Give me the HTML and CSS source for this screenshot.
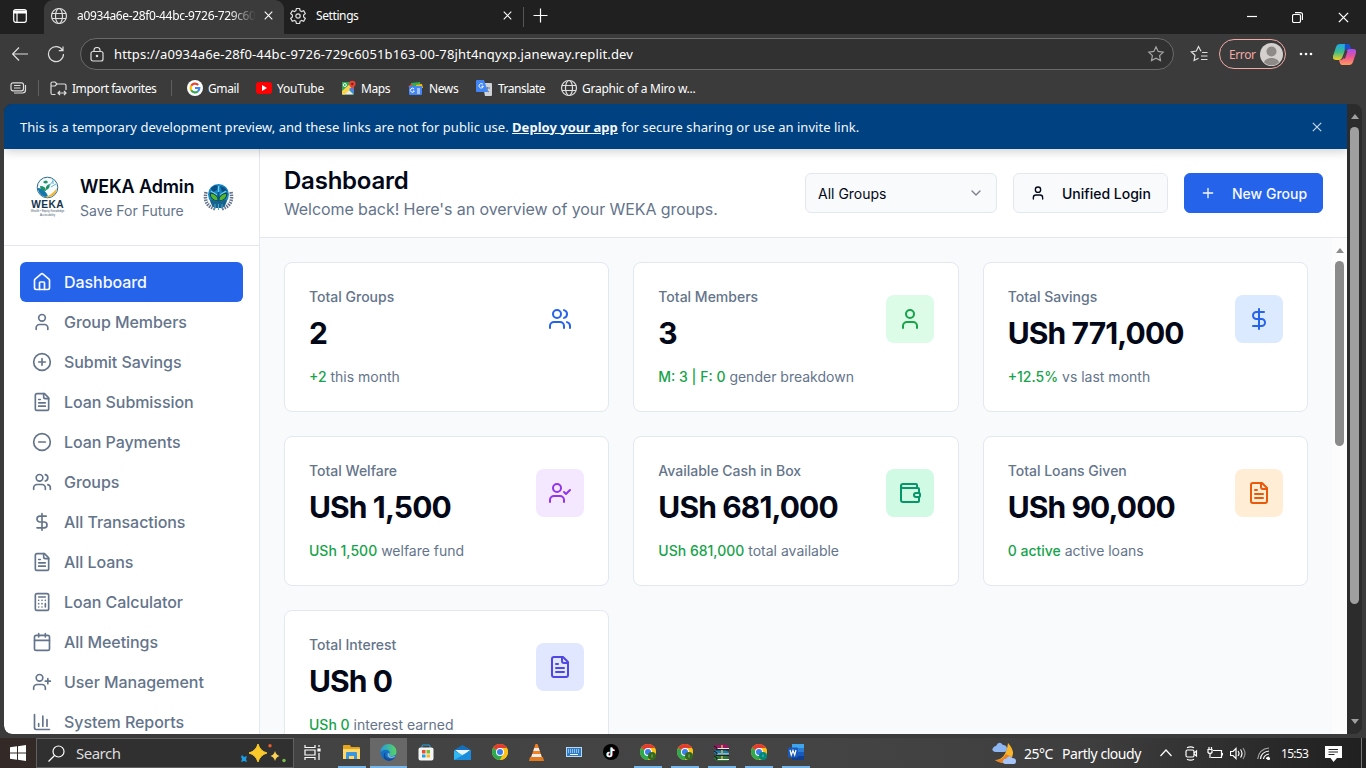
FILE: index.html
```
<!DOCTYPE html>
<html lang="en">
<head>
<meta charset="utf-8">
<title>WEKA Admin</title>
<link rel="stylesheet" href="styles.css">
</head>
<body>
<svg class="sprite" width="0" height="0">
  <defs>
    <symbol id="house" viewBox="0 0 24 24"><path d="M15 21v-8a1 1 0 0 0-1-1h-4a1 1 0 0 0-1 1v8"/><path d="M3 10a2 2 0 0 1 .709-1.528l7-5.999a2 2 0 0 1 2.582 0l7 5.999A2 2 0 0 1 21 10v9a2 2 0 0 1-2 2H5a2 2 0 0 1-2-2z"/></symbol>
    <symbol id="user" viewBox="0 0 24 24"><path d="M19 21v-2a4 4 0 0 0-4-4H9a4 4 0 0 0-4 4v2"/><circle cx="12" cy="7" r="4"/></symbol>
    <symbol id="users" viewBox="0 0 24 24"><path d="M16 21v-2a4 4 0 0 0-4-4H6a4 4 0 0 0-4 4v2"/><circle cx="9" cy="7" r="4"/><path d="M22 21v-2a4 4 0 0 0-3-3.87M16 3.13a4 4 0 0 1 0 7.75"/></symbol>
    <symbol id="user-plus" viewBox="0 0 24 24"><path d="M16 21v-2a4 4 0 0 0-4-4H6a4 4 0 0 0-4 4v2"/><circle cx="9" cy="7" r="4"/><path d="M19 8v6M22 11h-6"/></symbol>
    <symbol id="user-check" viewBox="0 0 24 24"><path d="M16 21v-2a4 4 0 0 0-4-4H6a4 4 0 0 0-4 4v2"/><circle cx="9" cy="7" r="4"/><path d="m16 11 2 2 4-4"/></symbol>
    <symbol id="circle-plus" viewBox="0 0 24 24"><circle cx="12" cy="12" r="10"/><path d="M8 12h8M12 8v8"/></symbol>
    <symbol id="circle-minus" viewBox="0 0 24 24"><circle cx="12" cy="12" r="10"/><path d="M8 12h8"/></symbol>
    <symbol id="file" viewBox="0 0 24 24"><path d="M15 2H6a2 2 0 0 0-2 2v16a2 2 0 0 0 2 2h12a2 2 0 0 0 2-2V7Z"/><path d="M14 2v4a2 2 0 0 0 2 2h4M10 9H8M16 13H8M16 17H8"/></symbol>
    <symbol id="dollar" viewBox="0 0 24 24"><path d="M12 2v20M17 5H9.5a3.5 3.5 0 0 0 0 7h5a3.5 3.5 0 0 1 0 7H6"/></symbol>
    <symbol id="calculator" viewBox="0 0 24 24"><rect width="16" height="20" x="4" y="2" rx="2"/><path d="M8 6h8M16 14v4M16 10h.01M12 10h.01M8 10h.01M12 14h.01M8 14h.01M12 18h.01M8 18h.01"/></symbol>
    <symbol id="calendar" viewBox="0 0 24 24"><path d="M8 2v4M16 2v4"/><rect width="18" height="18" x="3" y="4" rx="2"/><path d="M3 10h18"/></symbol>
    <symbol id="chart" viewBox="0 0 24 24"><path d="M3 3v16a2 2 0 0 0 2 2h16M18 17V9M13 17V5M8 17v-3"/></symbol>
    <symbol id="wallet" viewBox="0 0 24 24"><path d="M19 7V4a1 1 0 0 0-1-1H5a2 2 0 0 0 0 4h15a1 1 0 0 1 1 1v4h-3a2 2 0 0 0 0 4h3a1 1 0 0 0 1-1v-2a1 1 0 0 0-1-1"/><path d="M3 5v14a2 2 0 0 0 2 2h15a1 1 0 0 0 1-1v-4"/></symbol>
    <symbol id="plus" viewBox="0 0 24 24"><path d="M5 12h14M12 5v14"/></symbol>
    <symbol id="chevron" viewBox="0 0 24 24"><path d="m6 9 6 6 6-6"/></symbol>
    <symbol id="close" viewBox="0 0 10 10"><path d="M.8.8l8.4 8.4M9.2.8.8 9.2"/></symbol>
    <symbol id="globe" viewBox="0 0 18 18"><circle cx="9" cy="9" r="7.5"/><ellipse cx="9" cy="9" rx="3.5" ry="7.5"/><path d="M2 6.5h14M2 11.5h14"/></symbol>
    <symbol id="star" viewBox="0 0 18 18"><path d="m9 1.8 2.2 4.6 5 .7-3.6 3.5.9 5L9 13.2l-4.5 2.4.9-5L1.8 7.1l5-.7z"/></symbol>
    <symbol id="chrome" viewBox="0 0 18 18"><circle cx="9" cy="9" r="8" fill="#fbc116"/><path d="M9 9 2.1 5A8 8 0 0 1 15.9 5z" fill="#e33b2e"/><path d="M2.1 5A8 8 0 0 0 9 17l3.3-6z" fill="#2da94f"/><path d="M9 5h6.9A8 8 0 0 1 9 17l3.5-6z" fill="#fbc116"/><circle cx="9" cy="9" r="4" fill="#fff"/><circle cx="9" cy="9" r="3" fill="#3b7ded"/></symbol>
  </defs>
</svg>

<div class="desktop">
  <div class="tabs">
    <div class="tab-menu"><svg width="16" height="16" viewBox="0 0 16 16" class="line white"><rect x="1.7" y="1.7" width="12.6" height="12.6" rx="2"/><path d="M2 3h12v2H2z" fill="#fff"/><path d="M5 5v9"/></svg></div>
    <div class="tab active">
      <svg width="18" height="18" class="line light"><use href="#globe"/></svg>
      <span class="tab-title fade">a0934a6e-28f0-44bc-9726-729c60</span>
      <svg width="9" height="9" class="line white"><use href="#close"/></svg>
    </div>
    <div class="tab">
      <svg width="18" height="18" viewBox="0 0 18 18" class="line light"><path d="M7.4 1.5h3.2l.5 2.2 1.4.8 2.2-.7 1.6 2.8-1.7 1.5v1.8l1.7 1.5-1.6 2.8-2.2-.7-1.4.8-.5 2.2H7.4l-.5-2.2-1.4-.8-2.2.7-1.6-2.8 1.7-1.5V8.100L1.700 6.600l1.600-2.800 2.200.7 1.400-.8z"/><circle cx="9" cy="9" r="2.200"/></svg>
      <span class="tab-title">Settings</span>
      <svg width="9" height="9" class="line white"><use href="#close"/></svg>
    </div>
    <div class="new-tab"><svg width="15" height="15" viewBox="0 0 15 15" class="line white"><path d="M7.500.5v14M.5 7.500h14"/></svg></div>
    <div class="window-buttons">
      <svg width="10" height="10" viewBox="0 0 10 10" class="line white"><path d="M0 4.500h10"/></svg>
      <svg width="11" height="11" viewBox="0 0 11 11" class="line white"><rect x=".5" y="2.500" width="8" height="8" rx="1.500"/><path d="M3 .6h5.500a2 2 0 0 1 2 2V8"/></svg>
      <svg width="11" height="11" class="line white"><use href="#close"/></svg>
    </div>
  </div>

  <div class="toolbar">
    <svg width="16" height="14" viewBox="0 0 16 14" class="line light"><path d="M16 7H.8M7 .5.6 7 7 13.500"/></svg>
    <svg width="18" height="18" viewBox="0 0 18 18" class="line light reload"><path d="M15.600 5.500A7.500 7.500 0 1 0 16.500 9M16 1.500v4.200h-4.200"/></svg>
    <div class="address">
      <svg width="14" height="15" viewBox="0 0 14 15" class="line light"><rect x="1" y="4.500" width="12" height="9.500" rx="2"/><path d="M4 4.500V3a3 2.500 0 0 1 6 0v1.500"/><circle cx="7" cy="9" r=".7" fill="#ddd"/></svg>
      <span class="url">https://a0934a6e-28f0-44bc-9726-729c6051b163-00-78jht4nqyxp.janeway.replit.dev</span>
      <svg width="18" height="18" class="line dim"><use href="#star"/></svg>
    </div>
    <svg width="18" height="18" viewBox="0 0 18 18" class="line light favorites"><path d="M11 6.200 8.500 1.500 6.300 6l-5 .8L5 10.300 4.100 15.500l4.400-2.300M12 7.500h5.500M11 11h6.500M11 14.500h6.500"/></svg>
    <div class="profile"><span>Error</span><svg width="23" height="23" viewBox="0 0 23 23"><circle cx="11.500" cy="11.500" r="11.500" fill="#d3d0cd"/><circle cx="11.500" cy="8.500" r="5" fill="#8d8a87"/><path d="M4 19.500c1-6 14-6 15 0a11.500 11.500 0 0 1-15 0z" fill="#8d8a87"/></svg></div>
    <svg width="14" height="4" viewBox="0 0 14 4" fill="#fff" class="more"><circle cx="2" cy="2" r="1.300"/><circle cx="7" cy="2" r="1.300"/><circle cx="12" cy="2" r="1.300"/></svg>
    <svg width="23" height="21" viewBox="0 0 23 21" class="copilot">
      <defs><linearGradient id="cpA" x1="0" y1="0" x2="0" y2="1"><stop offset="0" stop-color="#1da8e8"/><stop offset=".5" stop-color="#3ebc8c"/><stop offset="1" stop-color="#f4cf21"/></linearGradient><linearGradient id="cpB" x1="0" y1="0" x2="0" y2="1"><stop offset="0" stop-color="#a44df0"/><stop offset=".5" stop-color="#ee5492"/><stop offset="1" stop-color="#ff9c5c"/></linearGradient></defs>
      <path d="M7 0h7q2 0 3 5h-4q-1 0-2 4l-2 5q-1 2-3 2H3q-4 0-3-4L3 3q1-3 4-3z" fill="url(#cpA)"/><path d="M12 0h3q2 0 3 5h-5q-1 0-1.500 1.500z" fill="#1650d0"/><path d="M16 21H9q-2 0-3-5h1q3 0 4-3l2-5q1-3 3-3h4q4 0 3 4l-3 9q-1 3-4 3z" fill="url(#cpB)"/><path d="M10.500 14.500 13 7h1.500L12 14.500z" fill="#3b3b3b"/>
    </svg>
  </div>

  <div class="bookmarks">
    <svg width="17" height="12" viewBox="0 0 17 12" class="line light"><rect x="1" y=".8" width="12.500" height="8" rx="2"/><path d="M4 3.500h6.500M4 6h6.500M15.500 3v5q0 3-3 3H4"/></svg>
    <i class="sep"></i>
    <svg width="17" height="15" viewBox="0 0 17 15" class="line light"><path d="M5.500 13.500H2.500Q1 13.500 1 12V2.500Q1 1 2.500 1H5l2 2h7.500Q16 3 16 4.500V9M1 5h4l2-2M8 12h8M10 10l-2 2 2 2M14 10l2 2-2 2"/></svg>
    <span class="bm bm-import">Import favorites</span>
    <i class="sep"></i>
    <svg width="16" height="16" viewBox="0 0 16 16"><circle cx="8" cy="8" r="8" fill="#fff"/><g fill="none" stroke-width="2.200"><path d="M4.200 5.700A4.400 4.400 0 0 1 11.200 5" stroke="#ea4335"/><path d="M4.200 5.700a4.400 4.400 0 0 0 0 4.600" stroke="#fbbc05"/><path d="M4.200 10.300A4.400 4.400 0 0 0 11 11.200" stroke="#34a853"/><path d="M11 11.200A4.400 4.400 0 0 0 12.300 8H8" stroke="#4285f4"/></g></svg>
    <span class="bm bm-gmail">Gmail</span>
    <svg width="16" height="12" viewBox="0 0 16 12"><rect width="16" height="12" rx="3" fill="#f00"/><path d="m6 3 5 3-5 3z" fill="#fff"/></svg>
    <span class="bm bm-youtube">YouTube</span>
    <svg width="15" height="16" viewBox="0 0 15 16"><path d="M1 2h12v12.500H1z" fill="#34a853"/><path d="M7 9 1.500 14.500h11z" fill="#e8eaed"/><path d="M1 11 10 3h2v4L3.500 14.500H1z" fill="#fbd34b"/><path d="m8 9 5 5V8l-2-1z" fill="#4285f4"/><path d="M8 4a3.300 3.300 0 0 1 6.600 0c0 2.200-2.600 3-3.300 6-.7-3-3.300-3.800-3.300-6z" fill="#ea4335"/><circle cx="11.300" cy="4" r="1.200" fill="#8a1c14"/><circle cx="3.800" cy="5" r="1.500" fill="none" stroke="#fff"/></svg>
    <span class="bm bm-maps">Maps</span>
    <svg width="15" height="13" viewBox="0 0 15 13"><path d="m3 1 9-1 1 5H3z" fill="#34a853"/><path d="m0 5 3-3 3 3z" fill="#ea4335"/><path d="m8 3 6-1 1 4H8z" fill="#fbbc05"/><rect x="1" y="4" width="13" height="9" rx="1" fill="#4285f4"/><path d="M6 7a2 2 0 1 0 .3 2H5M9 7h3M9 9h3M9 11h3" fill="none" stroke="#fff"/></svg>
    <span class="bm bm-news">News</span>
    <svg width="16" height="16" viewBox="0 0 16 16"><path d="M6 3h9q1 0 1 1v11q0 1-1 1H9z" fill="#cfd2d6"/><path d="M9 8h5M11.500 7v1q0 3-3 4M10 9q1 2 3 3" stroke="#66809b" fill="none"/><path d="M1 0h7l4 12H1q-1 0-1-1V1q0-1 1-1z" fill="#4285f4"/><path d="M7 4.500a2.200 2.200 0 1 0 .4 1.800H5.500" fill="none" stroke="#fff"/></svg>
    <span class="bm bm-translate">Translate</span>
    <svg width="18" height="18" class="line light"><use href="#globe"/></svg>
    <span class="bm bm-miro">Graphic of a Miro w...</span>
  </div>

  <div class="viewport">
    <div class="page">
      <div class="banner">
        <p>This is a temporary development preview, and these links are not for public use. <a>Deploy your app</a> for secure sharing or use an invite link.</p>
        <svg width="10" height="10" class="line"><use href="#close"/></svg>
      </div>
      <div class="app">
        <aside class="sidebar">
          <div class="brand">
            <svg class="brand-logo" width="36" height="42" viewBox="0 0 36 42">
              <circle cx="17.500" cy="11.500" r="10.300" fill="#f5fafa" stroke="#286b92" stroke-width="1"/><path d="M7.500 12q5 0 8 4 3 3 2 5.500-8-1-10-9.500z" fill="#1476aa"/><path d="M15 21q7-2 12-9-.5 8.500-10 9.500z" fill="#f3b839"/><path d="M16 15q-6 0-6-5 6 0 6 5zm0-1q-1-5 4-6 0 5-4 6zM13 6q3-3 5 0-2 3-5 0z" fill="#1b9367"/><path d="M19 10l4-5M21 11l5-3M23 3v5" stroke="#69b5da"/>
              <text x="17.700" y="32.200" class="logo-name">WEKA</text><text x="17.500" y="36" class="logo-tag">Wealth • Equity Knowledge</text><text x="17.500" y="39.500" class="logo-tag">Accessibility</text>
            </svg>
            <div class="brand-text"><h2>WEKA Admin</h2><p>Save For Future</p></div>
            <svg class="brand-seal" width="31" height="28" viewBox="0 0 31 28"><g fill="none" stroke="#65738b" stroke-width="3.500" stroke-dasharray="1.500 1"><path d="M3 9q-3 14 10 17M28 9q3 14-10 17"/></g><circle cx="15.500" cy="11.500" r="10.500" fill="#1588c5"/><path d="M8 5q4-4 7-2l-1 4-5 3zM17 3q6 1 7 5l-5 1z" fill="#0e4f86"/><path d="M15.500 3v9M8 8l6 4M23 8l-6 4" stroke="#6fd0ec" stroke-width="1.200"/><path d="M15.500 18q-8 0-8.500-8 8 1 8.500 8zm0 0q8 0 8.500-8-8 1-8.500 8z" fill="#53b72e" stroke="#123d44" stroke-width="1"/><path d="M15.500 9v13" stroke="#08598f" stroke-width="2"/><path d="M7 17q4-1 8.500 2 4-3 8.500-2-1 7-6 8h-5q-5-1-6-8z" fill="#17658e"/><path d="M12 21v5M15.500 21v6M19 21v5" stroke="#4ba7cf"/></svg>
          </div>
          <nav>
            <a class="active"><svg><use href="#house"/></svg>Dashboard</a>
            <a><svg><use href="#user"/></svg>Group Members</a>
            <a><svg><use href="#circle-plus"/></svg>Submit Savings</a>
            <a><svg><use href="#file"/></svg>Loan Submission</a>
            <a><svg><use href="#circle-minus"/></svg>Loan Payments</a>
            <a><svg><use href="#users"/></svg>Groups</a>
            <a><svg><use href="#dollar"/></svg>All Transactions</a>
            <a><svg><use href="#file"/></svg>All Loans</a>
            <a><svg><use href="#calculator"/></svg>Loan Calculator</a>
            <a><svg><use href="#calendar"/></svg>All Meetings</a>
            <a><svg><use href="#user-plus"/></svg>User Management</a>
            <a><svg><use href="#chart"/></svg>System Reports</a>
          </nav>
        </aside>
        <main>
          <header>
            <div><h1>Dashboard</h1><p>Welcome back! Here's an overview of your WEKA groups.</p></div>
            <div class="actions">
              <div class="select">All Groups<svg><use href="#chevron"/></svg></div>
              <div class="button"><svg><use href="#user"/></svg>Unified Login</div>
              <div class="button primary"><svg><use href="#plus"/></svg>New Group</div>
            </div>
          </header>
          <div class="content">
            <div class="cards">
              <section class="card"><div class="top"><div><h3>Total Groups</h3><strong>2</strong></div><span class="badge plain"><svg><use href="#users"/></svg></span></div><p><b>+2</b> this month</p></section>
              <section class="card"><div class="top"><div><h3>Total Members</h3><strong>3</strong></div><span class="badge green"><svg><use href="#user"/></svg></span></div><p><b>M: 3 | F: 0</b> gender breakdown</p></section>
              <section class="card"><div class="top"><div><h3>Total Savings</h3><strong>USh 771,000</strong></div><span class="badge blue"><svg><use href="#dollar"/></svg></span></div><p><b>+12.5%</b> vs last month</p></section>
              <section class="card"><div class="top"><div><h3>Total Welfare</h3><strong>USh 1,500</strong></div><span class="badge purple"><svg><use href="#user-check"/></svg></span></div><p><b>USh 1,500</b> welfare fund</p></section>
              <section class="card"><div class="top"><div><h3>Available Cash in Box</h3><strong>USh 681,000</strong></div><span class="badge emerald"><svg><use href="#wallet"/></svg></span></div><p><b>USh 681,000</b> total available</p></section>
              <section class="card"><div class="top"><div><h3>Total Loans Given</h3><strong>USh 90,000</strong></div><span class="badge orange"><svg><use href="#file"/></svg></span></div><p><b>0 active</b> active loans</p></section>
              <section class="card"><div class="top"><div><h3>Total Interest</h3><strong>USh 0</strong></div><span class="badge indigo"><svg><use href="#file"/></svg></span></div><p><b>USh 0</b> interest earned</p></section>
            </div>
            <div class="scrollbar inner"><i class="arrow up"></i><i class="thumb"></i></div>
          </div>
        </main>
      </div>
    </div>
    <div class="scrollbar outer"><i class="arrow up"></i><i class="thumb"></i><i class="arrow down"></i></div>
  </div>

  <div class="taskbar">
    <div class="start"><svg width="16" height="16" viewBox="0 0 16 16" fill="#fff"><path d="M0 2.300 7 1.300v6.200H0zM8 1.200 16 0v7.500H8zM0 8.500h7v6.200l-7-1zM8 8.500h8V16l-8-1.200z"/></svg></div>
    <div class="search">
      <svg width="17" height="17" viewBox="0 0 17 17" class="line white"><circle cx="10.500" cy="6.500" r="5.500"/><path d="M6.500 10.500.5 16.500"/></svg><span>Search</span>
      <svg width="46" height="19" viewBox="0 0 46 19"><path d="M18 0q2 7 9 9-7 2-9 9-2-7-9-9 7-2 9-9z" fill="#fbc929" stroke="#fbc929"/><path d="M35 7q1 4 4.500 5Q36 13 35 17q-1-4-4.500-5Q34 11 35 7z" fill="#fbd255"/><path d="m2 11 2 2 3-1-1 3 1 3-3-1-3 1 1-3-1-2z" fill="#1a9ee8"/><circle cx="30" cy="1.700" r="1.700" fill="#e95b2a"/><circle cx="44" cy="16.500" r="1.700" fill="#77bf45"/></svg>
    </div>
    <div class="task view"><svg width="17" height="17" viewBox="0 0 17 17" class="line white"><path d="M1 1v2.500h10V1M1 16v-2.500h10V16M1 6h10v5H1zM15 1v2M15 9v7"/><path d="M14 5h2v2h-2z" fill="#fff"/></svg></div>
    <div class="task open"><svg width="17" height="15" viewBox="0 0 17 15"><path d="M0 1q0-1 1-1h6l1 2h8q1 0 1 1v11H0z" fill="#e5a51d"/><path d="M0 4h17v10H0z" fill="#ffd867"/><path d="M3 8q0-1 1-1h9q1 0 1 1v6h-3v-3H6v3H3z" fill="#3a96dd"/></svg></div>
    <div class="task open current"><svg width="17" height="17" viewBox="0 0 17 17"><defs><linearGradient id="edg"><stop stop-color="#279bdc"/><stop offset="1" stop-color="#58d361"/></linearGradient></defs><circle cx="8.500" cy="8.500" r="8" fill="#1572c4"/><path d="M.5 8A8 8 0 0 1 16.500 8q0 4-5 4-3 0-2-2 1-3-2-4-4-1-7 2z" fill="url(#edg)"/><path d="M6 8q-3 6 5 7 2 0 4-2-2 4-7 4-6-2-4-7z" fill="#124c98"/><path d="M9.500 10q-1 2 2 2.500 2.500 0 4-1-1 2.500-4 2.500-4 0-4-4 1-2 2 0z" fill="#dfe8ed" opacity=".55"/></svg></div>
    <div class="task"><svg width="16" height="17" viewBox="0 0 16 17"><path d="M4 5V2q0-1 1-1h6q1 0 1 1v3" fill="none" stroke="#26a9e0"/><rect x=".5" y="3.500" width="15" height="13" rx="2" fill="#f5f5f5"/><path d="M4 6h3.500v3.500H4z" fill="#e85030"/><path d="M8.500 6H12v3.500H8.500z" fill="#7abd38"/><path d="M4 10.500h3.500v3H4z" fill="#20a2e0"/><path d="M8.500 10.500H12v3H8.500z" fill="#f5b92b"/></svg></div>
    <div class="task"><svg width="17" height="15" viewBox="0 0 17 15"><path d="M0 5 8.500 0 17 5v9H0z" fill="#1470bd"/><path d="M1 5h15l-7.500 6z" fill="#e9f4fa"/><path d="M0 5.500 8.500 10 17 5.500V15H0z" fill="#31b8f2"/><path d="M0 15 17 5.500V15z" fill="#1b8cdb"/></svg></div>
    <div class="task"><svg width="18" height="18"><use href="#chrome"/></svg></div>
    <div class="task"><svg width="15" height="17" viewBox="0 0 15 17"><path d="M6.500 0h2l5 15h-12z" fill="#f48120"/><path d="M5.300 4h4.400l1 3H4.300zM3.300 10h8.400l1 3H2.300z" fill="#eee"/><path d="m1 13-1 4h15l-1-4z" fill="#e57a1c"/></svg></div>
    <div class="task"><svg width="16" height="10" viewBox="0 0 16 10"><rect x=".5" y=".5" width="15" height="9" fill="#2d7ac5" stroke="#b8d9f3"/><path d="M2 3h12M2 5h12" stroke="#fff" stroke-dasharray="1 1"/><path d="M4 7.500h8" stroke="#fff"/></svg></div>
    <div class="task"><svg width="16" height="16" viewBox="0 0 16 16"><circle cx="8" cy="8" r="8" fill="#000"/><g fill="none" stroke-width="1.500"><path d="M8 3.500v7a2 2 0 1 1-2-2" stroke="#25f4ee"/><path d="M9 3.500v7a2 2 0 1 1-2-2M9 4q1 2.500 3 2.500" stroke="#fe2c55"/><path d="M8.500 3.500v7a2 2 0 1 1-2-2M8.500 4q1 2.500 3 2.500" stroke="#fff"/></g></svg></div>
    <div class="task open"><svg width="18" height="18" viewBox="0 0 18 18"><use href="#chrome"/><circle cx="13" cy="13" r="4" fill="#33691e"/><path d="M13 11.500v3" stroke="#8fae6c"/></svg></div>
    <div class="task open"><svg width="18" height="18" viewBox="0 0 18 18"><use href="#chrome"/><circle cx="13" cy="13" r="4" fill="#33691e"/><path d="M13 11.500v3" stroke="#8fae6c"/></svg></div>
    <div class="task open"><svg width="17" height="17" viewBox="0 0 17 17"><path d="M1 1.500 12 0l4 3-1 2.500H4L1 4z" fill="#9a1763"/><path d="m1 6.500 11-1 4 3-1 2.500H4L1 9z" fill="#1d80a8"/><path d="m1 12 11-1 4 2.500-1 3.500H4l-3-2.500z" fill="#2b7536"/><path d="M4 4.500h12M4 10h12M4 15.500h12" stroke="#eee" stroke-width="1.200"/><path d="M3 5.800h13M3 11.300h13" stroke="#171717"/><path d="M9 1v3M9 6v3M9 12v3" stroke="#d5b653" stroke-width="1.500"/><path d="m1 2 3 2v1M1 7l3 2v1M1 12l3 2v2" stroke="#111" fill="none"/></svg></div>
    <div class="task open"><svg width="18" height="18" viewBox="0 0 18 18"><use href="#chrome"/><circle cx="13" cy="13" r="4" fill="#00897b"/><path d="M13 11.500v2.500" stroke="#69bdb4"/></svg></div>
    <div class="task open word"><svg width="16" height="16" viewBox="0 0 16 16"><path d="M4 0h12v5H4z" fill="#41a5ee"/><path d="M4 4h12v4H4z" fill="#2b7cd3"/><path d="M4 8h12v4H4z" fill="#185abd"/><path d="M4 12h12v4H4z" fill="#103f91"/><rect y="3.500" width="10" height="10" rx="1" fill="#185abd"/><path d="m2 6 1.300 5L5 6.500 6.700 11 8 6" fill="none" stroke="#fff" stroke-width="1.200"/></svg></div>
    <div class="tray">
      <svg width="24" height="23" viewBox="0 0 24 23"><path d="M16 1q9 10 2 17-6 6-15 0 11 0 13-17z" fill="#f9b62d"/><path d="M3 18q7 1 11-6l6 3q-7 10-17 3z" fill="#e88024"/><path d="M3 10q-4-1-2-4 1-2 3-2 3-6 7-1 4 0 4 4 0 3-3 3z" fill="#8eb6f3"/><path d="M13 22q-3-1-2-3 1-3 3-2 3-5 6-1 4 0 4 3t-2 3z" fill="#a5c5f8"/></svg>
      <span class="temp">25°C</span><span class="weather">Partly cloudy</span>
      <svg class="line white t-chev" width="12" height="8" viewBox="0 0 12 8"><path d="M.5 7 6 1l5.500 6"/></svg>
      <svg class="line white t-cam" width="13" height="15" viewBox="0 0 13 15"><path d="M2 1.800q3.500-2 7 0M2 13.200q3.500 2 7 0"/><rect x="1" y="4" width="8" height="7" rx="1.500"/><path d="m9 7 2.500-2v5L9 8"/></svg>
      <svg class="line white t-bat" width="16" height="13" viewBox="0 0 16 13"><path d="M6 3.500h8.500v7H4M15.500 6v2.500M1 2.500v3q2 2 4 0v-3zM2 0v2.500M4.500 0v2.500M3 6.500V11"/></svg>
      <svg class="line white t-vol" width="16" height="13" viewBox="0 0 16 13"><path d="M.5 4.500H3l3-3v10l-3-3H.5zM8 4q2 2.500 0 5M10.500 2.500q3 4 0 8"/><path d="M13 1q4 5.500 0 11" opacity=".5"/></svg>
      <svg class="line white t-wifi" width="14" height="13" viewBox="0 0 14 13"><path d="M.7 12Q2 2 12 1" opacity=".6"/><path d="M3.500 12Q4 5 12 4M6.500 12Q7 8 12 7M9.500 12q0-2 2.500-2"/><circle cx="11.500" cy="11.500" r="1" fill="#fff"/></svg>
      <span class="clock">15:53</span>
      <svg class="t-note" width="17" height="17" viewBox="0 0 17 17"><path d="M0 1h17v12h-5l-3.500 4-3-4H0z" fill="#fff"/><path d="M3.500 4.500h9.500M3.500 7h9.500M3.500 9.500h6" stroke="#262626"/></svg>
      <i class="show-desktop"></i>
    </div>
  </div>
</div>
</body>
</html>
```
FILE: styles.css
```
* { box-sizing: border-box; margin: 0; padding: 0; }
body { width: 1366px; height: 768px; overflow: hidden; background: #3b3b3b; font-family: Inter, sans-serif; }
.sprite { position: absolute; }
svg { display: block; flex: none; }
.line { fill: none; stroke: currentColor; stroke-width: 1.2; }
.white { color: #fff; }
.light { color: #dedede; }
.dim { color: #a4a4a4; }
.desktop { display: flex; flex-direction: column; height: 768px; }

.tabs, .toolbar, .bookmarks, .taskbar, .banner { font-family: "Noto Sans", "Open Sans", sans-serif; color: #fff; flex: none; }
.tabs { display: flex; height: 34px; background: #202020; font-size: 12px; }
.tab-menu { width: 44px; padding: 8px 0 0 12px; }
.tab { display: flex; align-items: center; width: 239px; padding: 0 11px 3px 5px; }
.tab.active { width: 240px; background: #3b3b3b; border-radius: 9px 9px 0 0; padding-left: 6px; }
.tab-title { flex: 1; margin-left: 9px; white-space: nowrap; letter-spacing: -.4px; }
.fade { flex: none; width: 179px; margin-right: 8px; letter-spacing: -.35px; mask-image: linear-gradient(90deg, #000 85%, transparent); }
.new-tab { border-left: 1px solid #555; margin-top: 7px; height: 20px; padding: 1px 0 0 9px; }
.window-buttons { display: flex; align-items: center; margin-left: auto; padding-right: 17px; gap: 35px; }

.toolbar { display: flex; align-items: center; height: 39px; padding: 1px 10px 0 12px; }
.reload { margin-left: 19px; }
.address { display: flex; align-items: center; width: 1095px; height: 32px; margin-left: 15px; padding: 0 8px 0 9px; border: 1px solid #6a6a6a; border-radius: 16px; background: #313131; }
.url { flex: 1; margin-left: 10px; font-size: 13px; letter-spacing: .15px; }
.favorites { margin-left: 16px; }
.profile { display: flex; align-items: center; gap: 5px; width: 67px; height: 30px; margin-left: 11px; padding-left: 9px; border: 1px solid #f3aaa5; border-radius: 15px; color: #f3aaa5; font-size: 12px; }
.profile span { width: 26px; letter-spacing: -.4px; }
.more { margin-left: 13px; }
.copilot { margin-left: 20px; }

.bookmarks { display: flex; align-items: center; height: 31px; padding: 0 0 1px 10px; font-size: 12px; letter-spacing: -.2px; }
.sep { width: 1px; height: 16px; background: #606060; margin: 0 11px; }
.bm { white-space: nowrap; margin-left: 5px; }
.bm-import { width: 88px; letter-spacing: -.45px; }
.bm-import + .sep { margin-right: 15px; }
.bm-gmail { width: 48px; letter-spacing: -.4px; }
.bm-youtube { width: 64px; }
.bm-maps { width: 47px; letter-spacing: -.4px; }
.bm-news { width: 47px; margin-left: 6px; letter-spacing: -.4px; }
.bm-translate { width: 62px; margin-left: 6px; letter-spacing: -.5px; }
.bm-miro { margin-left: 4px; letter-spacing: -.25px; }

.viewport { display: flex; width: 1358px; height: 630px; margin-left: 4px; border-radius: 8px; overflow: hidden; background: #2c2c2c; }
.page { width: 1343px; border-radius: 8px 0 0 8px; overflow: hidden; }
.banner { position: relative; display: flex; align-items: center; justify-content: space-between; height: 45px; padding: 0 25px 0 16px; background: #004182; box-shadow: 0 2px 10px rgba(0,0,0,.2); font-size: 13px; color: #f5f9fc; }
.banner p { letter-spacing: .035px; white-space: nowrap; }
.banner a { font-weight: 700; text-decoration: underline; letter-spacing: .02px; }
.banner svg { color: #c6d6e6; }
.app { display: flex; height: 585px; background: #fff; }
.sidebar { width: 256px; border-right: 1px solid #e2e8f0; }
.brand { display: flex; align-items: center; height: 97px; padding: 24px 0 24px 26px; border-bottom: 1px solid #e2e8f0; }
.brand-text { width: 119px; margin-left: 14px; white-space: nowrap; }
.brand-seal { margin-left: 4px; }
.logo-name { font: 700 10.2px "Liberation Sans", sans-serif; text-anchor: middle; fill: #14344b; letter-spacing: .4px; }
.logo-tag { font: 2.8px "Liberation Sans", sans-serif; text-anchor: middle; fill: #40586d; }
.brand h2 { font-size: 18px; line-height: 28px; font-weight: 600; color: #020817; letter-spacing: -.12px; }
.brand p { font-size: 14px; line-height: 20px; color: #64748b; }
nav { padding: 16px; }
nav a { display: flex; align-items: center; height: 40px; padding-left: 12px; gap: 12px; border-radius: 6px; color: #64748b; font-size: 16px; font-weight: 500; letter-spacing: -.06px; }
nav a.active { background: #2563eb; color: #f8fafc; }
nav svg, .actions svg, .badge svg { width: 20px; height: 20px; fill: none; stroke: currentColor; stroke-width: 2; stroke-linecap: round; stroke-linejoin: round; }
main { width: 1087px; }
header { display: flex; align-items: center; justify-content: space-between; height: 89px; padding: 0 24px; border-bottom: 1px solid #e2e8f0; }
h1 { font-size: 24px; line-height: 32px; font-weight: 600; color: #020817; letter-spacing: -.22px; }
header p { font-size: 16px; line-height: 24px; color: #64748b; letter-spacing: -.08px; }
.actions { display: flex; gap: 16px; font-size: 14px; color: #020817; }
.actions svg { width: 16px; height: 16px; }
.select, .button { display: flex; align-items: center; height: 40px; border: 1px solid #e2e8f0; border-radius: 6px; background: #f9fafc; }
.select { width: 192px; justify-content: space-between; padding: 0 12px; }
.select svg { opacity: .5; }
.button { width: 155px; padding-left: 16px; gap: 16px; font-weight: 500; }
.button.primary { width: 139px; padding-left: 15px; background: #2563eb; border-color: #2563eb; color: #f8fafc; }
.content { display: flex; height: 496px; background: #f9fafc; overflow: hidden; }
.cards { display: grid; grid-template-columns: repeat(3, 1fr); grid-auto-rows: 150px; gap: 24px; width: 1072px; padding: 24px; }
.card { padding: 24px; border: 1px solid #e2e8f0; border-radius: 8px; background: #fff; }
.top { display: flex; justify-content: space-between; align-items: center; }
h3 { font-size: 14px; line-height: 20px; font-weight: 500; color: #64748b; }
.card strong { display: block; margin-top: 8px; font-size: 30px; line-height: 36px; font-weight: 700; color: #020817; letter-spacing: -.88px; }
.card p { margin-top: 16px; font-size: 14px; line-height: 20px; color: #64748b; }
.card b { font-weight: 500; color: #16a34a; }
.badge { display: grid; place-items: center; width: 48px; height: 48px; border-radius: 8px; }
.badge svg { width: 24px; height: 24px; }
.plain { color: #2563eb; }
.green { background: #dcfce7; color: #16a34a; }
.blue { background: #dbeafe; color: #2563eb; }
.purple { background: #f3e8ff; color: #9333ea; }
.emerald { background: #d1fae5; color: #059669; }
.orange { background: #ffedd5; color: #ea580c; }
.indigo { background: #e0e7ff; color: #4f46e5; }

.scrollbar { display: flex; flex-direction: column; align-items: center; width: 15px; }
.arrow { border: 4.5px solid transparent; }
.up { border-top: 0; border-bottom: 5px solid #8b8b8b; }
.down { border-bottom: 0; border-top: 5px solid #a0a0a0; }
.thumb { width: 9px; border-radius: 5px; background: #8b8b8b; }
.inner { background: #fcfcfc; padding-top: 10px; }
.inner .thumb { height: 185px; margin-top: 8px; }
.outer { padding-top: 10px; }
.outer .up { border-bottom-color: #a0a0a0; }
.outer .thumb { height: 477px; margin-top: 8px; background: #9f9f9f; }
.outer .down { margin-top: 115px; }

.taskbar { display: flex; height: 30px; margin-top: 4px; background: linear-gradient(90deg, #424242 0, #444 60%, #3e3e3e 80%, #252525 96%, #202020 100%); }
.start { display: grid; place-items: center; width: 36px; background: #332a27; }
.search { display: flex; align-items: center; width: 258px; padding: 0 7px 0 11px; border: 1px solid #606060; background: #303030; font-size: 15px; }
.search span { flex: 1; margin-left: 11px; color: #ddd; letter-spacing: -.5px; }
.task { display: grid; place-items: center; width: 37px; border-bottom: 2px solid transparent; background-clip: padding-box; }
.view { width: 39px; padding-right: 3px; }
.open { background: linear-gradient(#77b6ea, #77b6ea) bottom / 28px 2px no-repeat; border: 0; padding-bottom: 2px; }
.current { background: linear-gradient(#77b6ea, #77b6ea) bottom / 37px 2px no-repeat, #686868; }
.tray { display: flex; align-items: center; margin-left: auto; height: 30px; font-size: 14px; }
.temp { width: 30px; margin-left: 8px; letter-spacing: -.5px; white-space: nowrap; }
.weather { width: 80px; margin-left: 8px; letter-spacing: -.45px; white-space: nowrap; }
.t-chev { margin-left: 18px; }
.t-cam { margin-left: 13px; }
.t-bat { margin-left: 9px; }
.t-vol { margin-left: 7px; }
.t-wifi { margin-left: 11px; }
.clock { width: 28px; margin-left: 10px; font-size: 12px; letter-spacing: -.7px; }
.t-note { margin-left: 16px; }
.show-desktop { width: 5px; height: 30px; margin-left: 19px; border-left: 1px solid #777; }
```
